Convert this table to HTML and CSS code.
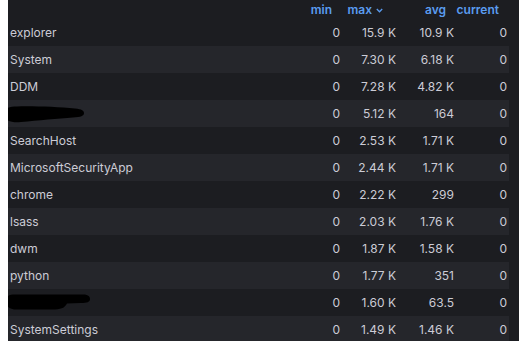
FILE: index.html
```html
<!DOCTYPE html>
<html>
<head>
<meta charset="utf-8">
<link rel="stylesheet" href="styles.css">
</head>
<body>
<div class="panel">
  <div class="table">
    <div class="row head">
      <div class="cell name"></div>
      <div class="cell num">min</div>
      <div class="cell num sorted">max <svg class="chev" width="7" height="5" viewBox="0 0 7 5"><polyline points="0.8,1 3.5,3.8 6.2,1" fill="none" stroke="#5a9cf0" stroke-width="1.3"/></svg></div>
      <div class="cell num">avg</div>
      <div class="cell num">current</div>
    </div>
    <div class="row"><div class="cell name">explorer</div><div class="cell num">0</div><div class="cell num">15.9 K</div><div class="cell num">10.9 K</div><div class="cell num">0</div></div>
    <div class="row alt"><div class="cell name">System</div><div class="cell num">0</div><div class="cell num">7.30 K</div><div class="cell num">6.18 K</div><div class="cell num">0</div></div>
    <div class="row"><div class="cell name">DDM</div><div class="cell num">0</div><div class="cell num">7.28 K</div><div class="cell num">4.82 K</div><div class="cell num">0</div></div>
    <div class="row alt"><div class="cell name"></div><div class="cell num">0</div><div class="cell num">5.12 K</div><div class="cell num">164</div><div class="cell num">0</div></div>
    <div class="row"><div class="cell name">SearchHost</div><div class="cell num">0</div><div class="cell num">2.53 K</div><div class="cell num">1.71 K</div><div class="cell num">0</div></div>
    <div class="row alt"><div class="cell name">MicrosoftSecurityApp</div><div class="cell num">0</div><div class="cell num">2.44 K</div><div class="cell num">1.71 K</div><div class="cell num">0</div></div>
    <div class="row"><div class="cell name">chrome</div><div class="cell num">0</div><div class="cell num">2.22 K</div><div class="cell num">299</div><div class="cell num">0</div></div>
    <div class="row alt"><div class="cell name">lsass</div><div class="cell num">0</div><div class="cell num">2.03 K</div><div class="cell num">1.76 K</div><div class="cell num">0</div></div>
    <div class="row"><div class="cell name">dwm</div><div class="cell num">0</div><div class="cell num">1.87 K</div><div class="cell num">1.58 K</div><div class="cell num">0</div></div>
    <div class="row alt"><div class="cell name">python</div><div class="cell num">0</div><div class="cell num">1.77 K</div><div class="cell num">351</div><div class="cell num">0</div></div>
    <div class="row"><div class="cell name"></div><div class="cell num">0</div><div class="cell num">1.60 K</div><div class="cell num">63.5</div><div class="cell num">0</div></div>
    <div class="row alt"><div class="cell name">SystemSettings</div><div class="cell num">0</div><div class="cell num">1.49 K</div><div class="cell num">1.46 K</div><div class="cell num">0</div></div>
  </div>
</div>
<svg class="blot blot1" width="82" height="20" viewBox="0 0 82 20">
  <path d="M1,10 C1,4 6,2.5 14,2.5 C30,2 55,3 72,4.5 C79,5 81,7 81,9 C81,12 78,13 70,13.5 C55,14.5 35,16.5 18,18 C7,19 1,16 1,10 Z" fill="#000"/>
</svg>
<svg class="blot blot2" width="86" height="18" viewBox="0 0 86 18">
  <path d="M1,8 C1,3 4,1.5 10,1.5 L78,1.5 C84,1.5 85,4 85,6 C85,9 82,10 76,10 L62,10.5 C60,14 58,16 50,16.5 L12,16.5 C4,16.5 1,13 1,8 Z" fill="#000"/>
</svg>
</body>
</html>
```

FILE: styles.css
```css
html, body {
  height: 341px;
}
body {
  margin: 0 0 0 8px;
  background: #ffffff;
  overflow: hidden;
  position: relative;
  font-family: Inter, "Noto Sans", sans-serif;
}
.panel {
  height: 341px;
  background: #1c1d21;
}
.table {
  width: 501px;
  display: flex;
  flex-direction: column;
}
.row {
  display: grid;
  grid-template-columns: 278px 56px 56px 58px 53px;
  height: 27px;
  align-items: center;
  font-size: 12px;
  color: #ccccd6;
}
.row.alt {
  background: #25262b;
}
.row.head {
  height: 19px;
  color: #5a9cf0;
  font-weight: 600;
  font-size: 12px;
}
.cell {
  white-space: nowrap;
}
.name {
  padding-left: 2px;
}
.num {
  text-align: right;
  padding-right: 2px;
}
.head .num {
  padding-right: 10px;
}
.head .num.sorted {
  padding-right: 15px;
}
.chev {
  vertical-align: middle;
  margin-left: 1px;
}
.blot {
  position: absolute;
}
.blot1 {
  left: -5px;
  top: 104px;
}
.blot2 {
  left: -3px;
  top: 293px;
}
```
